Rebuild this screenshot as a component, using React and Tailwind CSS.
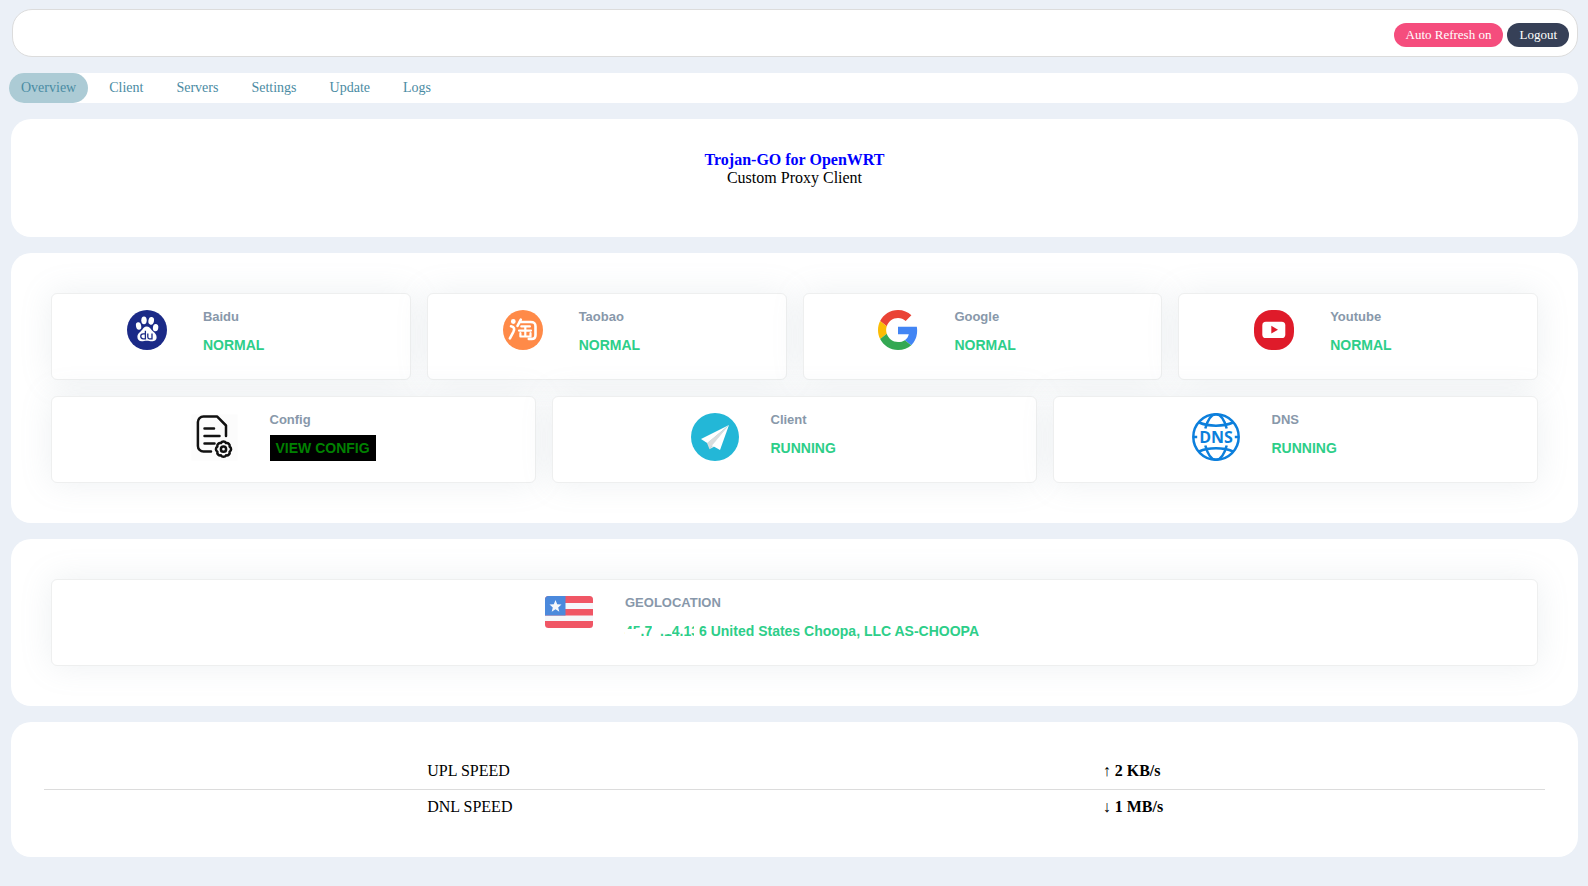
import React from "react";

function BaiduIcon() {
  return (
    <svg viewBox="0 0 40 40" className="size-10" role="img" aria-label="Baidu">
      <circle cx="20" cy="20" r="20" fill="#1b2a87" />
      <g fill="#fff">
        <ellipse cx="11.6" cy="16" rx="2.6" ry="3.8" transform="rotate(-12 11.6 16)" />
        <ellipse cx="17" cy="10.3" rx="2.7" ry="3.9" />
        <ellipse cx="24.2" cy="10.8" rx="2.8" ry="3.9" transform="rotate(10 24.2 10.8)" />
        <ellipse cx="28.6" cy="17.6" rx="2.7" ry="3.7" transform="rotate(8 28.6 17.6)" />
        <path d="M19.6 16.6c2.4 0 3.6 1.6 4.8 3.2 1.6 2.1 5.2 3.6 5.2 7.4 0 3-2.2 4-4.6 4-2 0-3.4-.5-5.4-.5s-3.200.5-4.800.5c-2.800 0-4.400-1.600-4.400-4.200 0-3.400 2.800-4.800 4.800-7.200 1.200-1.600 2.200-3.200 4.400-3.200z" />
      </g>
      <g fill="none" stroke="#1b2a87" strokeWidth="1.3">
        <path d="M18.4 20.8v8h-2.2a2.3 2.3 0 0 1 0-4.900h2.200" />
        <path d="M20.8 23.4v3.600c0 1.200.6 1.800 1.600 1.800h2.600v-5.400" />
      </g>
    </svg>
  );
}

function TaobaoIcon() {
  return (
    <svg viewBox="0 0 40 40" className="size-10" role="img" aria-label="Taobao">
      <circle cx="20" cy="20" r="20" fill="#ff8a48" />
      <g fill="none" stroke="#fff" strokeWidth="2.6" strokeLinecap="round" strokeLinejoin="round">
        <circle cx="10.3" cy="11.5" r="1.1" fill="#fff" />
        <path d="M8 16.2c3.4.8 3.8 2.600 2.400 5.600L6.900 28.400" />
        <path d="M17.8 9.600l-3.300 6.200" />
        <path d="M17 12h10.500c4 0 5 1.300 5 4.500v8.400c0 2.800-1.200 4-3.800 4h-2.900" />
        <path d="M18.300 16.400h8.600M16 20.600h12M22.300 16.600v9.600M17.400 23.200v3.300h10.100v-3.300" strokeWidth="2.200" />
      </g>
    </svg>
  );
}

function GoogleIcon() {
  return (
    <svg viewBox="0 0 48 48" className="size-10" role="img" aria-label="Google">
      <path fill="#EA4335" d="M24 9.500c3.540 0 6.710 1.220 9.210 3.600l6.850-6.850C35.900 2.380 30.470 0 24 0 14.620 0 6.510 5.380 2.560 13.220l7.980 6.190C12.430 13.720 17.740 9.500 24 9.500z" />
      <path fill="#4285F4" d="M46.980 24.550c0-1.570-.15-3.090-.38-4.550H24v9.020h12.940c-.58 2.960-2.260 5.480-4.780 7.180l7.730 6c4.510-4.180 7.090-10.360 7.090-17.650z" />
      <path fill="#FBBC05" d="M10.530 28.590c-.48-1.450-.76-2.990-.76-4.590s.27-3.140.76-4.590l-7.980-6.190C.92 16.460 0 20.120 0 24c0 3.880.92 7.540 2.560 10.780l7.970-6.190z" />
      <path fill="#34A853" d="M24 48c6.480 0 11.930-2.130 15.890-5.810l-7.730-6c-2.150 1.450-4.920 2.300-8.160 2.300-6.260 0-11.570-4.220-13.470-9.910l-7.980 6.190C6.510 42.620 14.620 48 24 48z" />
    </svg>
  );
}

function YoutubeIcon() {
  return (
    <svg viewBox="0 0 40 40" className="size-10" role="img" aria-label="Youtube">
      <rect width="40" height="40" rx="18" fill="#df1b2a" />
      <rect x="8.3" y="11.8" width="23" height="16.2" rx="3.6" fill="#fff" />
      <path d="M17.3 15.800v7.800l6.700-3.900z" fill="#df1b2a" />
    </svg>
  );
}

function ConfigIcon() {
  return (
    <svg viewBox="0 0 48 48" className="size-12" role="img" aria-label="Config">
      <rect x="1.500" y="1.500" width="46" height="46" fill="#fcfcfc" />
      <g fill="none" stroke="#111" strokeWidth="2.500" strokeLinecap="round" strokeLinejoin="round">
        <path d="M21 38.500H13.500a5.600 5.600 0 0 1-5.600-5.600V9a5.600 5.600 0 0 1 5.600-5.600H27L36 12.500V23" />
        <path d="M14.500 15.500H24M14.500 23h15M14.500 30.500h10" />
        <g transform="translate(33.500 36.200)">
          <path d="M6.100-2.530A2.900 2.900 0 0 1 6.100 2.530A2.900 2.900 0 0 1 2.530 6.100A2.900 2.900 0 0 1-2.530 6.100A2.900 2.900 0 0 1-6.100 2.530A2.900 2.900 0 0 1-6.100-2.530A2.900 2.900 0 0 1-2.530-6.100A2.900 2.900 0 0 1 2.530-6.100A2.900 2.900 0 0 1 6.100-2.530z" />
          <circle r="2.600" />
        </g>
      </g>
    </svg>
  );
}

function ClientIcon() {
  return (
    <svg viewBox="0 0 48 48" className="size-12" role="img" aria-label="Client">
      <circle cx="24" cy="24" r="24" fill="#23b7d7" />
      <path d="M38 12L10 26l6.500 4.200z" fill="#fff" />
      <path d="M38 12L16 30l2.500 6.200z" fill="#d9dcdd" />
      <path d="M38 12L18.500 36.200l5-2.800z" fill="#e8eaeb" />
      <path d="M38 12L21 32.500l8 4.500z" fill="#fff" />
    </svg>
  );
}

function DnsIcon() {
  return (
    <svg viewBox="0 0 48 48" className="size-12" role="img" aria-label="DNS">
      <g fill="none" stroke="#0c7fdc" strokeWidth="2.500">
        <circle cx="24" cy="24" r="22.700" />
        <path d="M7 9.500c9.500 4.200 24.500 4.200 34 0M7 38.500c9.500-4.200 24.500-4.200 34 0" />
        <path d="M13.300 15.500C15.500 7.500 19.500 1.200 24 1.200S32.500 7.500 34.700 15.500M13.300 32.500c2.200 8 6.200 14.300 10.700 14.300s8.500-6.300 10.700-14.300" />
        <path d="M1 24h4.200M42.800 24H47" />
      </g>
      <text x="24" y="30" textAnchor="middle" fill="#0c7fdc" fontSize="16" fontWeight="700" fontFamily="Open Sans, sans-serif">DNS</text>
    </svg>
  );
}

function FlagIcon() {
  return (
    <svg viewBox="0 0 48 32" className="h-8 w-12" role="img" aria-label="United States flag">
      <clipPath id="flag">
        <rect width="48" height="32" rx="3.500" />
      </clipPath>
      <g clipPath="url(#flag)">
        <rect width="48" height="32" fill="#f5f7fa" />
        <path d="M0 0h48v7H0zM0 13h48v6.500H0zM0 25h48v7H0z" fill="#f05665" />
        <rect width="20.500" height="19.500" fill="#4b89dc" />
        <path d="M10.500 4l1.700 4.300 4.300.2-3.300 2.900 1.100 4.400-3.800-2.500-3.800 2.500 1.100-4.400-3.300-2.900 4.300-.2z" fill="#f5f7fa" />
      </g>
    </svg>
  );
}

const sites = [
  { name: "Baidu", status: "NORMAL", icon: <BaiduIcon /> },
  { name: "Taobao", status: "NORMAL", icon: <TaobaoIcon /> },
  { name: "Google", status: "NORMAL", icon: <GoogleIcon /> },
  { name: "Youtube", status: "NORMAL", icon: <YoutubeIcon /> },
];

const services = [
  { name: "Config", icon: <ConfigIcon />, action: "VIEW CONFIG" },
  { name: "Client", icon: <ClientIcon />, status: "RUNNING" },
  { name: "DNS", icon: <DnsIcon />, status: "RUNNING" },
];

const tabs = ["Overview", "Client", "Servers", "Settings", "Update", "Logs"];

function Panel({ className, children }) {
  return <section className={"rounded-[20px] bg-white " + className}>{children}</section>;
}

function Card({ icon, name, width, children }) {
  return (
    <div className="flex justify-center gap-8 rounded-md border border-[#eeefef] bg-white p-4 font-['Liberation_Sans',sans-serif] text-sm leading-5 font-bold text-[#2dce89] shadow-[0_0_32px_rgba(136,152,170,0.15)]">
      <div className="flex h-12 w-12 shrink-0 items-start justify-center">{icon}</div>
      <div className={"h-[53px] " + width}>
        <h2 className="mb-3 pt-px text-[13px] leading-3 text-[#8898aa]">{name}</h2>
        {children}
      </div>
    </div>
  );
}

// Part of an address hidden by a white cover; `cover` says which part of the text it hides.
function Hidden({ cover, children }) {
  return (
    <span className="relative">
      {children}
      <span aria-hidden="true" className={"absolute bg-white " + cover} />
    </span>
  );
}

export default function App() {
  return (
    <div className="min-h-screen bg-[#ebf0f7] px-[10px] pt-[9px] pb-7 font-['Liberation_Serif',serif] text-base leading-[18px] text-black">
      <header className="ml-0.5 flex h-12 items-center justify-end gap-1 rounded-[20px] border border-[#dcdcdc] bg-white px-2 pt-1">
        <button type="button" className="h-6 rounded-full bg-[#f54d7d] px-3 text-[13px] font-medium text-white">Auto Refresh on</button>
        <button type="button" className="h-6 rounded-full bg-[#364057] px-3 text-[13px] font-medium text-white">Logout</button>
      </header>

      <nav className="mt-4 -ml-px flex gap-[9px] rounded-full bg-white text-sm leading-[18px] text-[#4a8ba3]">
        {tabs.map((t, i) => (
          <a key={t} href={"#" + t.toLowerCase()} className={"rounded-full px-3 py-1.5 " + (i === 0 ? "bg-[#accbd5]" : "")}>
            {t}
          </a>
        ))}
      </nav>

      <main className="mt-4 ml-px flex flex-col gap-4">
        <Panel className="px-8 pt-8 pb-[50px] text-center">
          <h1>
            <a href="#home" className="font-bold text-[#0000ff]">Trojan-GO for OpenWRT</a>
          </h1>
          <p>Custom Proxy Client</p>
        </Panel>

        <Panel className="flex flex-col gap-4 p-10">
          <div className="grid grid-cols-4 gap-4">
            {sites.map((s) => (
              <Card key={s.name} icon={s.icon} name={s.name} width="w-[136px]">
                <p>{s.status}</p>
              </Card>
            ))}
          </div>
          <div className="grid grid-cols-3 gap-4">
            {services.map((s) => (
              <Card key={s.name} icon={s.icon} name={s.name} width="w-32">
                {s.action ? (
                  <button type="button" className="-my-[3px] block bg-black px-1.5 py-[3px] font-bold text-[#008000]">{s.action}</button>
                ) : (
                  <p>{s.status}</p>
                )}
              </Card>
            ))}
          </div>
        </Panel>

        <Panel className="p-10">
          <Card icon={<FlagIcon />} name="GEOLOCATION" width="w-[419px]">
            <p>
              <Hidden cover="inset-x-0 top-[6px] bottom-0">45</Hidden>.7
              <Hidden cover="inset-0">6</Hidden>.
              <Hidden cover="inset-x-0 top-0 bottom-[5px]">1</Hidden>4.1
              <Hidden cover="left-[3px] right-0 inset-y-0">3</Hidden>6 United States Choopa, LLC AS-CHOOPA
            </p>
          </Card>
        </Panel>

        <Panel className="px-[33px] py-8">
          <table className="w-full table-fixed text-left">
            <colgroup>
              <col className="w-1/4" />
              <col className="w-[45%]" />
              <col className="w-[30%]" />
            </colgroup>
            <tbody>
              <tr className="h-[35px] border-b border-[#dcdcdc]">
                <td />
                <th scope="row" className="px-2 font-normal">UPL SPEED</th>
                <td className="px-2">↑ <b>2 KB/s</b></td>
              </tr>
              <tr className="h-9">
                <td />
                <th scope="row" className="px-2 font-normal">DNL SPEED</th>
                <td className="px-2">↓ <b>1 MB/s</b></td>
              </tr>
            </tbody>
          </table>
        </Panel>
      </main>
    </div>
  );
}
